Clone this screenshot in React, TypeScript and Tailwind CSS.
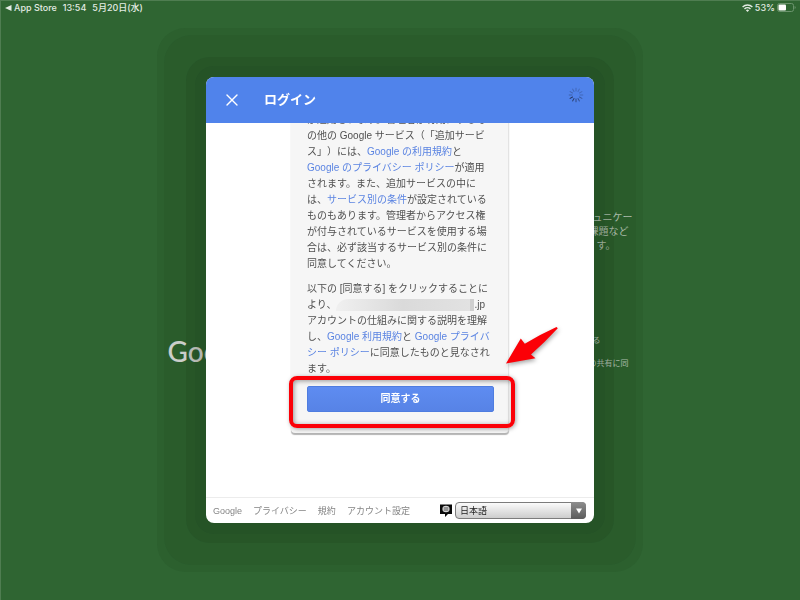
import { useState } from 'react';
import { X } from 'lucide-react';

const FOOTER_LINKS = ['Google', 'プライバシー', '規約', 'アカウント設定'];

const LANGUAGES = [
    { value: 'ja', label: '日本語' },
    { value: 'en', label: 'English' },
];

// Twelve spokes, darkest at the lower left
const SPOKES = [0.35, 0.3, 0.3, 0.35, 0.5, 0.65, 0.75, 0.9, 1, 0.45, 0.4, 0.35];

const StatusBar = () => (
    <header className="flex items-center justify-between pt-px px-1 h-3 text-[9px] leading-3 font-medium text-[#e3ebe3] font-['Inter','Noto_Sans_CJK_JP',sans-serif]">
        <div className="flex items-center">
            <svg width="7" height="6" viewBox="0 0 7 6" className="mr-0.5" aria-hidden="true">
                <path d="M0 3 6.5 0v6z" fill="currentColor" />
            </svg>
            <span>App Store</span>
            <span className="ml-1.5">13:54</span>
            <span className="ml-1.5">5月20日(水)</span>
        </div>
        <div className="flex items-center gap-0.5">
            <svg width="11" height="8" viewBox="0 0 11 8" fill="none" stroke="currentColor" strokeWidth="1.4" aria-hidden="true">
                <path d="M.6 3a7 7 0 0 1 9.8 0M2.5 5a4.3 4.3 0 0 1 6 0" />
                <path d="M3.9 6.3a2.3 2.3 0 0 1 3.2 0L5.5 8z" fill="currentColor" stroke="none" />
            </svg>
            <span>53%</span>
            <svg width="19" height="9" viewBox="0 0 19 9" aria-hidden="true">
                <rect x=".5" y=".5" width="16" height="8" rx="2" fill="none" stroke="#6b946d" />
                <rect x="1.5" y="1.5" width="7.5" height="6" rx="1" fill="#fff" />
                <path d="M17.6 3v3a1.6 1.6 0 0 0 0-3z" fill="#6b946d" />
            </svg>
        </div>
    </header>
);

// Start page that stays visible on both sides of the dialog
const StartPage = () => (
    <div className="mx-auto flex w-full max-w-[466px] items-start justify-between pt-[198px] text-[#c2d2c2] whitespace-nowrap">
        <div className="pt-[122px] text-[28px] leading-9 font-medium text-[#e6e6e6] font-['Lato',sans-serif]">Google</div>
        <div className="w-[45px] text-[8px] leading-3">
            <p className="text-[10px] leading-[14px]">
                <span className="pl-1">ュニケー</span><br />
                課題など<br />
                <span className="pl-2">す。</span>
            </p>
            <p className="mt-[82px] pl-1">る</p>
            <p className="mt-[11px]">の共有に同</p>
        </div>
    </div>
);

const Spinner = () => (
    <svg width="16" height="16" viewBox="0 0 16 16" stroke="#26365e" strokeWidth="1" strokeLinecap="round" aria-hidden="true">
        {SPOKES.map((opacity, i) => (
            <path key={i} d="M8 1.2v2.8" opacity={opacity} transform={`rotate(${i * 30} 8 8)`} />
        ))}
    </svg>
);

const TextLink = ({ children }: { children: React.ReactNode }) => (
    <a href="#" className="text-[#5b84e2]">
        {children}
    </a>
);

// Red frame and arrow drawn over the agree button
const Callout = () => (
    <>
        <div className="absolute -left-[18px] -right-[21px] -top-2.5 -bottom-4 rounded-lg border-4 border-[#fb0007] shadow-[1px_1px_4px_rgba(0,0,0,0.35),inset_1px_1px_5px_rgba(0,0,0,0.4)] pointer-events-none" />
        <svg
            width="56"
            height="42"
            viewBox="0 0 56 42"
            className="absolute left-[198px] -top-[61px] drop-shadow-[1px_2px_2px_rgba(0,0,0,0.35)] pointer-events-none"
            aria-hidden="true"
        >
            <path d="M1 38.5 15.8 13.5l4 5.2Q36 9 51.5 2L52.8 3.2Q40 17 26 29.500l4.500 3.700z" fill="#fb0007" />
        </svg>
    </>
);

const Terms = () => (
    <section className="mx-auto -mt-[11px] w-[218px] pl-4 pr-3.5 pb-[21px] bg-[#f6f6f6] border-r border-[#e3e3e3] rounded-b-sm shadow-[0_2px_1px_#b4b4b4] text-[10px] leading-4 text-[#505050] whitespace-nowrap">
        <p>
            が適用されます。管理者が有効にするそ<br />
            の他の Google サービス（「追加サービ<br />
            ス」）には、<TextLink>Google の利用規約</TextLink>と<br />
            <TextLink>Google のプライバシー ポリシー</TextLink>が適用<br />
            されます。また、追加サービスの中に<br />
            は、<TextLink>サービス別の条件</TextLink>が設定されている<br />
            ものもあります。管理者からアクセス権<br />
            が付与されているサービスを使用する場<br />
            合は、必ず該当するサービス別の条件に<br />
            同意してください。
        </p>
        <p className="mt-[9px]">
            以下の [同意する] をクリックすることに<br />
            より、
            <span className="inline-block w-[138px] h-3 align-middle bg-linear-to-r from-[#f0f0f0] via-[#dadada] to-[#e2e2e2] border-r-4 border-[#cfcfcf] rounded-tl-full" />
            .jp<br />
            アカウントの仕組みに関する説明を理解<br />
            し、<TextLink>Google 利用規約</TextLink>と <TextLink>Google プライバ<br />
            シー ポリシー</TextLink>に同意したものと見なされ<br />
            ます。
        </p>
        <div className="relative mt-[9px]">
            <button
                type="button"
                className="block w-full h-[26px] rounded-xs border border-[#4f7de0] bg-linear-to-b from-[#5e8cf1] to-[#5783e6] text-white font-bold"
            >
                同意する
            </button>
            <Callout />
        </div>
    </section>
);

const LanguagePicker = () => {
    const [language, setLanguage] = useState('ja');

    return (
        <div className="flex items-center gap-[3px]">
            <label htmlFor="language" aria-label="言語">
                <svg width="12" height="13" viewBox="0 0 12 13" aria-hidden="true">
                    <path d="M0 .5h12v9.5H8L5 13v-3H0z" fill="#0a0a0a" />
                    <ellipse cx="6" cy="5" rx="3.600" ry="3.200" fill="#d6d6d6" />
                    <path d="M3.5 4h5M3.5 6h5M5 3v4M7 3v4" stroke="#555" strokeWidth=".6" />
                </svg>
            </label>
            <div className="relative w-[131px]">
                <select
                    id="language"
                    value={language}
                    onChange={(e) => setLanguage(e.target.value)}
                    className="block w-full h-[17px] pl-1 pr-5 appearance-none rounded-sm border border-[#7c7c7c] bg-linear-to-b from-[#fbfbfb] to-[#cdcdcd] text-[9px] leading-3 text-[#222]"
                >
                    {LANGUAGES.map((l) => (
                        <option key={l.value} value={l.value}>
                            {l.label}
                        </option>
                    ))}
                </select>
                <div className="absolute inset-y-0 right-0 w-[15px] flex items-center justify-center rounded-r-sm bg-linear-to-b from-[#8e8e8e] to-[#5c5c5c] pointer-events-none">
                    <svg width="6" height="6" viewBox="0 0 6 6" aria-hidden="true">
                        <path d="M0 .5h6L3 5.5z" fill="#fff" />
                    </svg>
                </div>
            </div>
        </div>
    );
};

const LoginDialog = () => (
    <div
        role="dialog"
        aria-label="ログイン"
        className="w-full max-w-[388px] overflow-hidden rounded-lg bg-white shadow-[0_0_0_11px_rgba(20,30,0,0.04),0_0_0_20px_rgba(20,30,0,0.1),0_0_0_42px_rgba(10,40,0,0.05),0_0_0_49px_rgba(10,40,0,0.08)]"
    >
        <div className="flex items-center h-[46px] pl-4 pr-2.5 bg-[#5083eb] text-white">
            <button type="button" aria-label="閉じる">
                <X size={20} strokeWidth={1.6} />
            </button>
            <h1 className="ml-[22px] flex-1 text-[13px] leading-4 font-bold">ログイン</h1>
            <div className="self-start pt-2.5">
                <Spinner />
            </div>
        </div>
        <main className="overflow-hidden pb-16">
            <Terms />
        </main>
        <footer className="flex items-center justify-between h-[26px] pl-[7px] pr-2 border-t border-[#ececec] text-[9px] leading-3 text-[#858585]">
            <nav className="flex gap-[11px] whitespace-nowrap">
                {FOOTER_LINKS.map((link) => (
                    <a key={link} href="#">
                        {link}
                    </a>
                ))}
            </nav>
            <LanguagePicker />
        </footer>
    </div>
);

const App = () => {
    return (
        <div className="min-h-screen border-t border-l border-[#4f7d51] bg-[#2f6532] font-['Liberation_Sans','Noto_Sans_CJK_JP',sans-serif] [text-spacing-trim:space-all]">
            <StatusBar />
            <StartPage />
            <div className="fixed inset-0 flex items-center justify-center">
                <LoginDialog />
            </div>
        </div>
    );
};

export default App;
